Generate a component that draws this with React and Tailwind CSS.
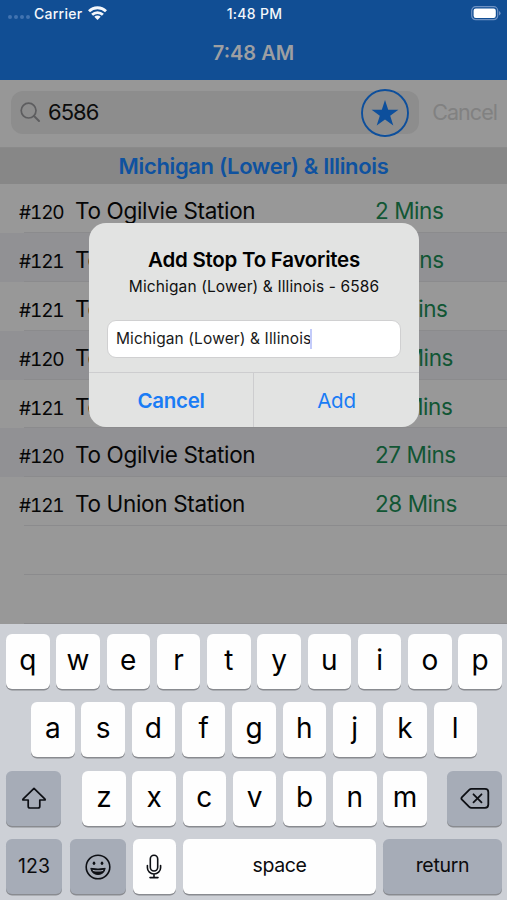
import { clsx } from 'clsx';

const arrivals = [
    { route: '#120', dest: 'To Ogilvie Station', mins: '2 Mins' },
    { route: '#121', dest: 'To Union Station', mins: '8 Mins' },
    { route: '#121', dest: 'To Union Station', mins: '11 Mins' },
    { route: '#120', dest: 'To Ogilvie Station', mins: '14 Mins' },
    { route: '#121', dest: 'To Union Station', mins: '19 Mins' },
    { route: '#120', dest: 'To Ogilvie Station', mins: '27 Mins' },
    { route: '#121', dest: 'To Union Station', mins: '28 Mins' },
];

function StatusBar() {
    return (
        <div className="grid h-[26px] grid-cols-3 items-center pl-2 pr-[6px] text-[14px] font-medium text-[#f4f7fb]">
            <div className="flex items-center">
                <div className="mt-[8px] flex gap-[2px]">
                    {[0, 1, 2, 3].map((dot) => (
                        <span key={dot} className="h-[4px] w-[4px] rounded-full bg-[#4273b0]" />
                    ))}
                </div>
                <span className="ml-[4px] tracking-[0.25px]">Carrier</span>
                <svg className="ml-[6px] h-[14px] w-[19px]" viewBox="0 0 19 14" fill="none" stroke="currentColor" strokeWidth="2.8">
                    <path d="M1 5.2a12.2 12.2 0 0 1 17 0" />
                    <path d="M4.1 8.7a7.8 7.8 0 0 1 10.8 0" />
                    <path d="M9.5 14 6.3 10.8a4.5 4.5 0 0 1 6.4 0z" fill="currentColor" stroke="none" />
                </svg>
            </div>
            <span className="text-center tracking-[0.3px]">1:48 PM</span>
            <svg className="h-[15px] w-[30px] justify-self-end" viewBox="0 0 30 15" fill="none">
                <rect x="0.7" y="0.7" width="26" height="13" rx="4" stroke="#6f92c3" strokeWidth="1.2" />
                <rect x="2.6" y="2.5" width="22.2" height="9.4" rx="2.2" fill="#fff" />
                <path d="M28 5v4.6q1.6-.8 1.6-2.3T28 5z" fill="#6f92c3" />
            </svg>
        </div>
    );
}

function SearchBar() {
    return (
        <div className="flex h-[68px] items-center border-b border-[#8a8a8a] bg-[#979797] pl-[11px] pr-[10px] pb-[1px]">
            <div className="flex h-[43px] w-[408px] items-center rounded-[12px] bg-[#8d8d8d] pl-[9px] pr-[10px]">
                <svg className="h-[21px] w-[21px]" viewBox="0 0 21 21" fill="none" stroke="#5d5d5f" strokeWidth="1.7" strokeLinecap="round">
                    <circle cx="8.6" cy="8.6" r="7.4" />
                    <path d="m14 14 5 5" strokeWidth="2" />
                </svg>
                <span className="ml-[7px] text-[22px] tracking-[-1px] text-[#0c0c0c]">6586</span>
                <svg className="ml-auto h-[48px] w-[48px]" viewBox="0 0 48 48">
                    <circle cx="24" cy="24" r="23" fill="none" stroke="#0d4f9c" strokeWidth="1.9" />
                    <path d="m24 11 3.2 9.7h10.2l-8.2 6 3.1 9.8-8.3-6-8.3 6 3.1-9.8-8.2-6h10.2z" fill="#0d4f9c" />
                </svg>
            </div>
            <span className="ml-auto text-[21.5px] tracking-[-0.95px] text-[#818181]">Cancel</span>
        </div>
    );
}

function ArrivalRow({ item, index }) {
    return (
        <div className={clsx('relative flex h-[48.9px] pl-[19px]', index % 2 ? 'bg-[#919194]' : 'bg-[#989898]')}>
            {item && (
                <>
                    <span className="w-[56px] pt-[15px] text-[19px] leading-[28px] tracking-[-1.1px] tabular-nums">{item.route}</span>
                    <span className="w-[300px] pt-[12px] text-[22.5px] leading-[30px] tracking-[-0.33px]">{item.dest}</span>
                    <span className="pt-[12px] text-[22.5px] leading-[30px] tracking-[-0.43px] text-[#115634]">{item.mins}</span>
                </>
            )}
            <div className="absolute bottom-0 left-[24px] right-0 h-px bg-[#8b8b8d]" />
        </div>
    );
}

function FavoriteDialog() {
    return (
        <div className="absolute left-[89px] top-[223px] flex h-[204px] w-[330px] flex-col overflow-hidden rounded-[17px] bg-[#e2e3e2] text-center">
            <div className="h-[149px] px-[18px] pt-[22px]">
                <h2 className="whitespace-nowrap text-[20.5px] font-semibold leading-[29px] tracking-[-0.25px] text-black">Add Stop To Favorites</h2>
                <p className="whitespace-nowrap text-[15.5px] leading-[25px] tracking-[0.12px] text-[#101010]">Michigan (Lower) &amp; Illinois - 6586</p>
                <div className="mt-[21px] flex h-[38px] items-center rounded-[9px] border border-[#d0d0d1] bg-white pl-[8px]">
                    <span className="whitespace-nowrap text-[15.5px] tracking-[0.12px] text-[#1a1a1a]">Michigan (Lower) &amp; Illinois</span>
                    <span className="-ml-px h-[20px] w-[2px] bg-[#c3cbfa]" />
                </div>
            </div>
            <div className="grid flex-1 grid-cols-2 border-t border-[#cdcdcf] text-[20.5px] text-[#1a7cf5]">
                <button className="border-r border-[#cdcdcf] pt-[2px] font-semibold tracking-[-0.3px]">Cancel</button>
                <button className="pt-[2px] tracking-[-0.2px]">Add</button>
            </div>
        </div>
    );
}

function Key({ children, className }) {
    return (
        <button
            className={clsx(
                'flex h-[55px] shrink-0 items-center justify-center rounded-[6px] shadow-[0_1.5px_0_#898b90]',
                className
            )}
        >
            {children}
        </button>
    );
}

function LetterKeys({ letters }) {
    return letters.split('').map((letter) => (
        <Key key={letter} className="w-[43.5px] bg-[#fefefe] pb-[3px] text-[28px] font-normal text-black">
            {letter}
        </Key>
    ));
}

function Keyboard() {
    return (
        <div className="flex h-[276px] flex-col gap-[13.5px] bg-[#cdd0d6] pl-[6px] pr-[5px] pt-[9.5px]">
            <div className="flex justify-between">
                <LetterKeys letters="qwertyuiop" />
            </div>
            <div className="flex justify-between pl-[25px] pr-[25px]">
                <LetterKeys letters="asdfghjkl" />
            </div>
            <div className="flex justify-between">
                <Key className="w-[55px] bg-[#a6acb7]">
                    <svg className="h-[24px] w-[26px]" viewBox="0 0 26 24" fill="none" stroke="#0d0f14" strokeWidth="1.7" strokeLinejoin="round">
                        <path d="M13 2.3 24 13.2q.6.8-.4.8h-4.8v6.2q0 1.8-1.8 1.8H9q-1.8 0-1.8-1.8V14H2.4q-1 0-.4-.8z" />
                    </svg>
                </Key>
                <div className="flex gap-[6.7px] pl-px">
                    <LetterKeys letters="zxcvbnm" />
                </div>
                <Key className="w-[55px] bg-[#a6acb7]">
                    <svg className="h-[23px] w-[30px]" viewBox="0 0 30 23" fill="none" stroke="#0d0f14" strokeWidth="1.8" strokeLinejoin="round" strokeLinecap="round">
                        <path d="M11.5 1.8H25q3.3 0 3.3 3.3v12.5q0 3.3-3.3 3.3H11.5q-1.3 0-2.3-1L2 12.7q-1.2-1.3 0-2.6l7.2-7.3q1-1 2.3-1z" />
                        <path d="m13.5 7.3 8 8m0-8-8 8" />
                    </svg>
                </Key>
            </div>
            <div className="flex text-[19.5px] text-[#0b0b0d]">
                <Key className="w-[56px] bg-[#a6acb7]">123</Key>
                <Key className="ml-[8px] w-[56px] bg-[#a6acb7]">
                    <svg className="h-[26px] w-[26px]" viewBox="0 0 26 26" fill="none" stroke="#0d0f14" strokeWidth="1.6">
                        <circle cx="13" cy="13" r="11.8" />
                        <ellipse cx="9" cy="9.2" rx="1.3" ry="1.7" fill="#0d0f14" stroke="none" />
                        <ellipse cx="17" cy="9.2" rx="1.3" ry="1.7" fill="#0d0f14" stroke="none" />
                        <path d="M5.8 14.3q7.2 1.6 14.4 0-1.2 6.2-7.2 6.2t-7.2-6.2z" fill="#0d0f14" strokeWidth="1" />
                        <path d="M7.5 15.7q5.5 1.2 11 0l-.6 1.2q-4.9 1-9.8 0z" fill="#a6acb7" stroke="none" />
                    </svg>
                </Key>
                <Key className="ml-[6.5px] w-[43.5px] bg-[#fefefe]">
                    <svg className="h-[25px] w-[16px]" viewBox="0 0 16 25" fill="none" stroke="#0d0f14" strokeWidth="1.6" strokeLinecap="round">
                        <rect x="4.3" y="1.2" width="7.4" height="15.8" rx="3.7" />
                        <path d="M1.4 11.5v2.2a6.6 6.3 0 0 0 13.2 0v-2.2M8 20v3.4M4 23.6h8" />
                    </svg>
                </Key>
                <Key className="ml-[7px] w-[193px] bg-[#fefefe] pb-[2px] tracking-[-0.4px]">space</Key>
                <Key className="ml-[7px] w-[119px] bg-[#a6acb7] pb-[2px] tracking-[-0.3px]">return</Key>
            </div>
        </div>
    );
}

export default function App() {
    return (
        <main className="relative h-[900px] w-[507px] overflow-hidden bg-[#989898] font-['Inter',sans-serif] text-[#060606]">
            {/* Navigation bar */}
            <header className="h-[79.5px] bg-[#114e94]">
                <StatusBar />
                <h1 className="pt-[11.5px] text-center text-[20px] font-semibold leading-[30px] text-[#9d9fa2]">7:48 AM</h1>
            </header>

            <SearchBar />

            {/* Upcoming arrivals */}
            <section className="h-[476.5px] overflow-hidden">
                <h2 className="h-[36.5px] bg-[#878787] text-center text-[22px] font-semibold leading-[36px] tracking-[-0.35px] text-[#0f529f]">
                    Michigan (Lower) &amp; Illinois
                </h2>
                {arrivals.map((item, index) => (
                    <ArrivalRow key={index} item={item} index={index} />
                ))}
                <ArrivalRow index={8} />
                <ArrivalRow index={10} />
            </section>

            <Keyboard />
            <FavoriteDialog />
        </main>
    );
}
